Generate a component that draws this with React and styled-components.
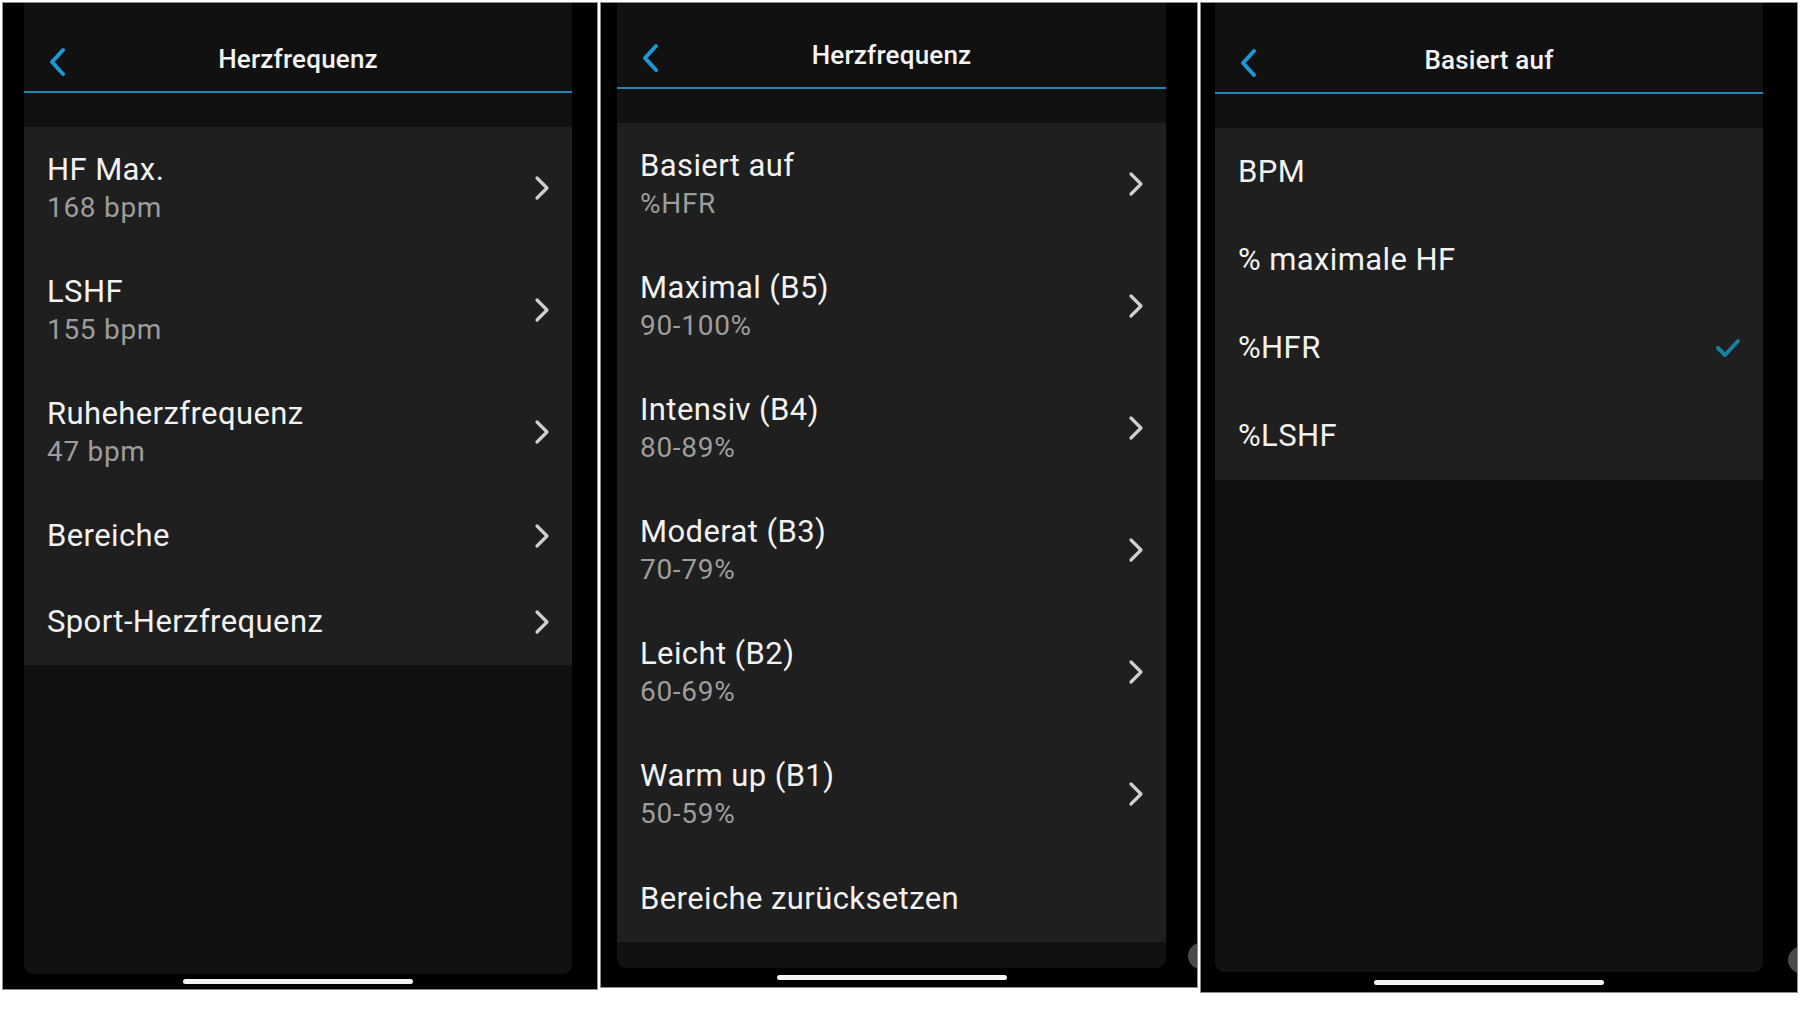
import React from 'react';
import styled, { createGlobalStyle } from 'styled-components';

const GlobalStyle = createGlobalStyle`
  html, body {
    margin: 0;
    padding: 0;
    background: #ffffff;
  }
  body {
    font-family: Roboto, "Noto Sans", "Liberation Sans", sans-serif;
    -webkit-font-smoothing: antialiased;
  }
`;

const Page = styled.div`
  display: flex;
  align-items: flex-start;
  gap: 2px;
  width: 1800px;
  height: 1012px;
  padding: 2px 2px 0 2px;
  box-sizing: border-box;
  background: #ffffff;
`;

const Phone = styled.section`
  position: relative;
  display: flex;
  flex-direction: column;
  width: ${(p) => p.width}px;
  height: ${(p) => p.height}px;
  padding: 0 ${(p) => p.padRight}px 0 ${(p) => p.padLeft}px;
  box-sizing: border-box;
  background: #000;
  border: 1px solid #8d8d8d;
  overflow: hidden;
`;

const Screen = styled.div`
  flex: 1;
  display: flex;
  flex-direction: column;
  background: #111111;
  border-radius: 0 0 9px 9px;
`;

const Header = styled.header`
  position: relative;
  display: flex;
  align-items: flex-end;
  justify-content: center;
  height: ${(p) => p.height}px;
  padding-bottom: 17px;
  box-sizing: border-box;
  border-bottom: 2px solid #2186b6;
`;

const Back = styled.span`
  position: absolute;
  left: 23px;
  bottom: 14px;
  display: flex;
`;

const Title = styled.h1`
  margin: 0;
  font-size: 26px;
  line-height: 30px;
  font-weight: 500;
  color: #f4f4f4;
  letter-spacing: 0.2px;
`;

const List = styled.ul`
  list-style: none;
  margin: 34px 0 0;
  padding: 0;
  background: #1f1f1f;
`;

const Row = styled.li`
  display: flex;
  align-items: center;
  justify-content: space-between;
  height: ${(p) => p.height}px;
  padding: 0 22px 0 23px;
  box-sizing: border-box;
`;

const Texts = styled.div`
  display: flex;
  flex-direction: column;
  padding-top: ${(p) => (p.twoLine ? 2 : 0)}px;
`;

const Label = styled.span`
  font-size: 31px;
  line-height: 38px;
  letter-spacing: 0.4px;
  color: #f2f2f2;
`;

const Sub = styled.span`
  font-size: 28px;
  line-height: 38px;
  letter-spacing: 0.7px;
  color: #9d9d9d;
`;

const Footer = styled.div`
  display: flex;
  align-items: center;
  justify-content: center;
  height: ${(p) => p.height}px;
`;

const HomeBar = styled.span`
  width: 230px;
  height: 5px;
  border-radius: 3px;
  background: #f4f4f4;
`;

const TouchDot = styled.span`
  position: absolute;
  right: -17px;
  top: ${(p) => p.top}px;
  width: 26px;
  height: 26px;
  border-radius: 50%;
  background: #4a4a4a;
`;

const BackIcon = () => (
  <svg width="22" height="30" viewBox="0 0 22 30">
    <polyline
      points="16,3 5,15 16,27"
      fill="none"
      stroke="#1c9ad8"
      strokeWidth="4"
      strokeLinecap="round"
      strokeLinejoin="round"
    />
  </svg>
);

const Chevron = () => (
  <svg width="16" height="28" viewBox="0 0 16 28">
    <polyline
      points="3,4 13,14 3,24"
      fill="none"
      stroke="#cfcfcf"
      strokeWidth="3.2"
      strokeLinecap="round"
      strokeLinejoin="round"
    />
  </svg>
);

const Check = () => (
  <svg width="26" height="22" viewBox="0 0 26 22">
    <polyline
      points="3,11 10,18 23,4"
      fill="none"
      stroke="#17819f"
      strokeWidth="4"
      strokeLinecap="round"
      strokeLinejoin="round"
    />
  </svg>
);

const Nav = ({ title, height }) => (
  <Header height={height}>
    <Back>
      <BackIcon />
    </Back>
    <Title>{title}</Title>
  </Header>
);

const MenuRow = ({ label, sub, height }) => (
  <Row height={height || (sub ? 122 : 86)}>
    <Texts twoLine={!!sub}>
      <Label>{label}</Label>
      {sub && <Sub>{sub}</Sub>}
    </Texts>
    <Chevron />
  </Row>
);

const heartRate = [
  { label: 'HF Max.', sub: '168 bpm' },
  { label: 'LSHF', sub: '155 bpm' },
  { label: 'Ruheherzfrequenz', sub: '47 bpm' },
  { label: 'Bereiche' },
  { label: 'Sport-Herzfrequenz' },
];

const zones = [
  { label: 'Basiert auf', sub: '%HFR' },
  { label: 'Maximal (B5)', sub: '90-100%' },
  { label: 'Intensiv (B4)', sub: '80-89%' },
  { label: 'Moderat (B3)', sub: '70-79%' },
  { label: 'Leicht (B2)', sub: '60-69%' },
  { label: 'Warm up (B1)', sub: '50-59%' },
];

const bases = ['BPM', '% maximale HF', '%HFR', '%LSHF'];

export default function App() {
  return (
    <>
      <GlobalStyle />
      <Page>
        <Phone width={596} height={988} padLeft={21} padRight={25}>
          <Screen>
            <Nav title="Herzfrequenz" height={90} />
            <List>
              {heartRate.map((r) => (
                <MenuRow key={r.label} {...r} />
              ))}
            </List>
          </Screen>
          <Footer height={15}>
            <HomeBar />
          </Footer>
        </Phone>

        <Phone width={598} height={986} padLeft={16} padRight={31}>
          <Screen>
            <Nav title="Herzfrequenz" height={86} />
            <List>
              {zones.map((r) => (
                <MenuRow key={r.label} {...r} />
              ))}
              <Row height={87}>
                <Label>Bereiche zurücksetzen</Label>
              </Row>
            </List>
          </Screen>
          <Footer height={19}>
            <HomeBar />
          </Footer>
          <TouchDot top={940} />
        </Phone>

        <Phone width={598} height={991} padLeft={14} padRight={34}>
          <Screen>
            <Nav title="Basiert auf" height={91} />
            <List>
              {bases.map((b) => (
                <Row key={b} height={88}>
                  <Label>{b}</Label>
                  {b === '%HFR' && <Check />}
                </Row>
              ))}
            </List>
          </Screen>
          <Footer height={20}>
            <HomeBar />
          </Footer>
          <TouchDot top={944} />
        </Phone>
      </Page>
    </>
  );
}
